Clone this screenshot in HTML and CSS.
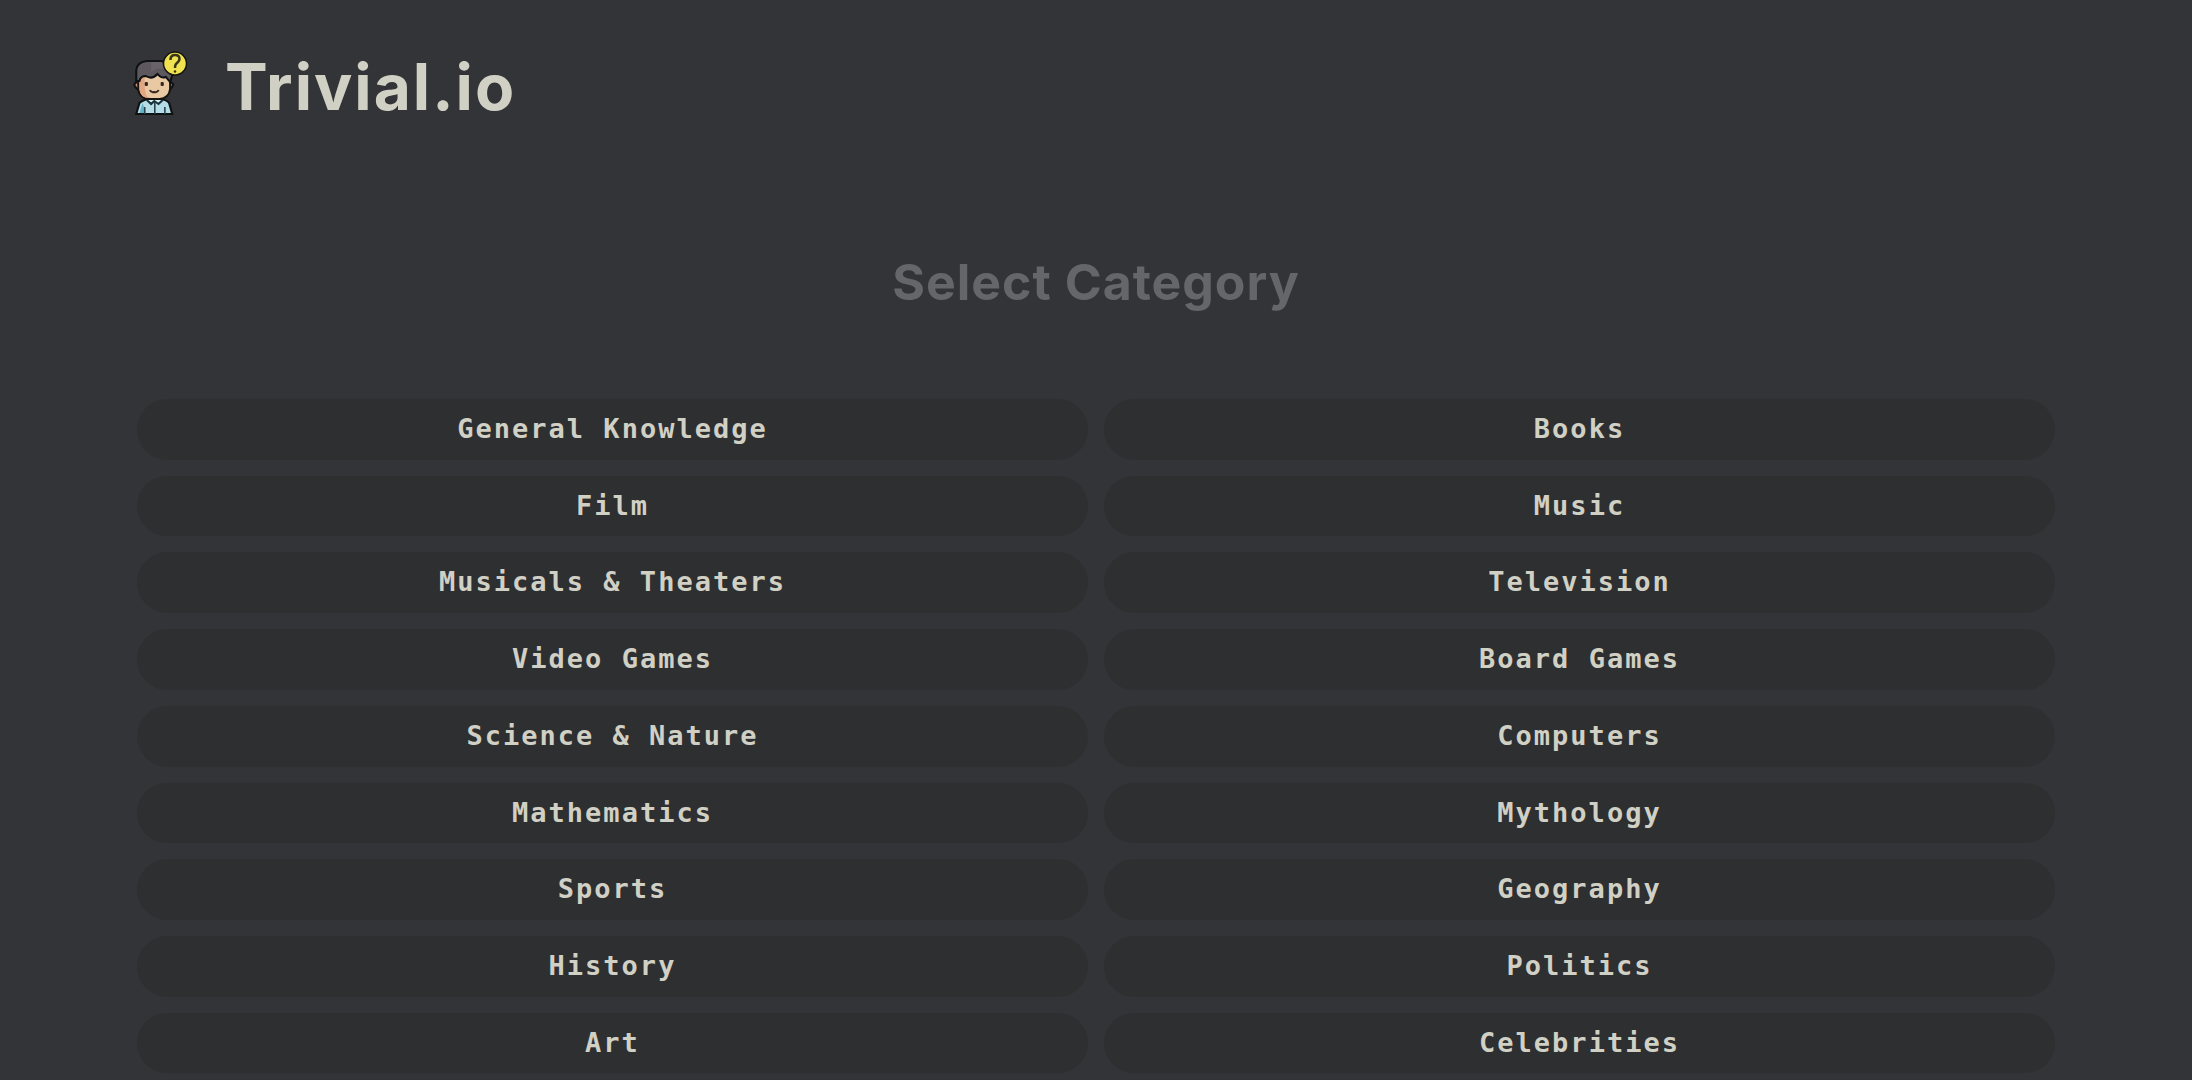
FILE: index.html
```html
<!DOCTYPE html>
<html lang="en">
<head>
<meta charset="utf-8">
<meta name="viewport" content="width=device-width, initial-scale=1">
<title>Trivial.io</title>
<link rel="stylesheet" href="styles.css">
</head>
<body>
<header class="header">
  <svg class="logo" viewBox="0 0 56 66" aria-hidden="true">
    <g transform="translate(-1 0) scale(1.06 1)">
      <!-- shirt -->
      <path d="M4 64 L7 53 Q10 50 16 49 H27 Q33 50 35 53 L38 64Z" fill="#b4dde8" stroke="#101113" stroke-width="2"/>
      <path d="M7 63 L10 53 L13 63Z" fill="#65b3c8"/>
      <path d="M14 50 L18 54 L21 51 L25 54 L29 50" fill="#d9f1f5" stroke="#17323a" stroke-width="2"/>
      <path d="M21.500 52 V64 M12 57 V64 M31 57 V64" stroke="#27444e" stroke-width="1.500"/>
      <!-- head -->
      <path d="M5 32 Q0 34 4 38 L6 40 M36 32 Q41 34 37 38 L35 40" fill="#c98e6e" stroke="#101113" stroke-width="2"/>
      <path d="M6 26 V39 Q7 49 17 49 H26 Q35 48 36 39 V26 L27 22 H12Z" fill="#e9c9a4" stroke="#17130f" stroke-width="2"/>
      <path d="M7 29 V40 Q8 47 15 48 Q11 42 12 27Z" fill="#e2a782"/>
      <!-- hair -->
      <path d="M4 31 V20 Q5 12 14 11 H28 Q34 13 36 21 L38 25 L36 32 L32 27 Q28 29 24 24 Q19 30 13 26 Q8 26 7 31Z" fill="#5d575e" stroke="#101113" stroke-width="2"/>
      <path d="M18 12 H28 L32 20 Q24 16 18 22Z" fill="#696269"/>
      <!-- face -->
      <rect x="12" y="32" width="3" height="4" rx="1" fill="#34261f"/>
      <rect x="27" y="32" width="3" height="4" rx="1" fill="#34261f"/>
      <path d="M17 40 Q18 43 21 42 Q24 43 25 40" fill="none" stroke="#34261f" stroke-width="2"/>
    </g>
    <!-- question badge -->
    <circle cx="42" cy="13.500" r="11.500" fill="#f0e34f" stroke="#141512" stroke-width="1.500"/>
    <path d="M37.500 10 V9 Q38 5 42 5 Q46.500 5 46.500 9 Q46.500 11 43 14 Q42 15 42 18" fill="none" stroke="#39351b" stroke-width="2.500"/>
    <circle cx="42" cy="21.500" r="1.300" fill="#39351b"/>
  </svg>
  <h1 class="brand">Trivial.io</h1>
</header>
<main class="main">
  <h2 class="title">Select Category</h2>
  <div class="categories">
    <button type="button" class="category">General Knowledge</button>
    <button type="button" class="category">Books</button>
    <button type="button" class="category">Film</button>
    <button type="button" class="category">Music</button>
    <button type="button" class="category">Musicals &amp; Theaters</button>
    <button type="button" class="category">Television</button>
    <button type="button" class="category">Video Games</button>
    <button type="button" class="category">Board Games</button>
    <button type="button" class="category">Science &amp; Nature</button>
    <button type="button" class="category">Computers</button>
    <button type="button" class="category">Mathematics</button>
    <button type="button" class="category">Mythology</button>
    <button type="button" class="category">Sports</button>
    <button type="button" class="category">Geography</button>
    <button type="button" class="category">History</button>
    <button type="button" class="category">Politics</button>
    <button type="button" class="category">Art</button>
    <button type="button" class="category">Celebrities</button>
  </div>
</main>
</body>
</html>
```
FILE: styles.css
```css
* {
  box-sizing: border-box;
}

body {
  margin: 0;
  padding: 47px 6.25% 0;
  background: #333438;
  color: #d1d0c5;
  font-family: Inter, "Liberation Sans", sans-serif;
}

.header {
  display: flex;
  align-items: center;
  gap: 36px;
}

.logo {
  width: 56px;
  height: 66px;
  margin: 0 0 8px -4px;
}

.brand {
  margin: 0;
  font-size: 64px;
  line-height: 80px;
  font-weight: 700;
  letter-spacing: 2px;
}

.title {
  margin: 120px 0 82px;
  color: #646669;
  font-size: 50px;
  line-height: 70px;
  font-weight: 700;
  letter-spacing: 1px;
  text-align: center;
}

.categories {
  display: grid;
  grid-template-columns: repeat(2, 1fr);
  gap: 16px;
}

.category {
  padding: 12px 24px;
  border: 0;
  border-radius: 32px;
  background: #2e2f31;
  color: #d1d0c5;
  font-family: "DejaVu Sans Mono", monospace;
  font-size: 27px;
  font-weight: 700;
  line-height: 1.36;
  letter-spacing: 2px;
  cursor: pointer;
}
```
